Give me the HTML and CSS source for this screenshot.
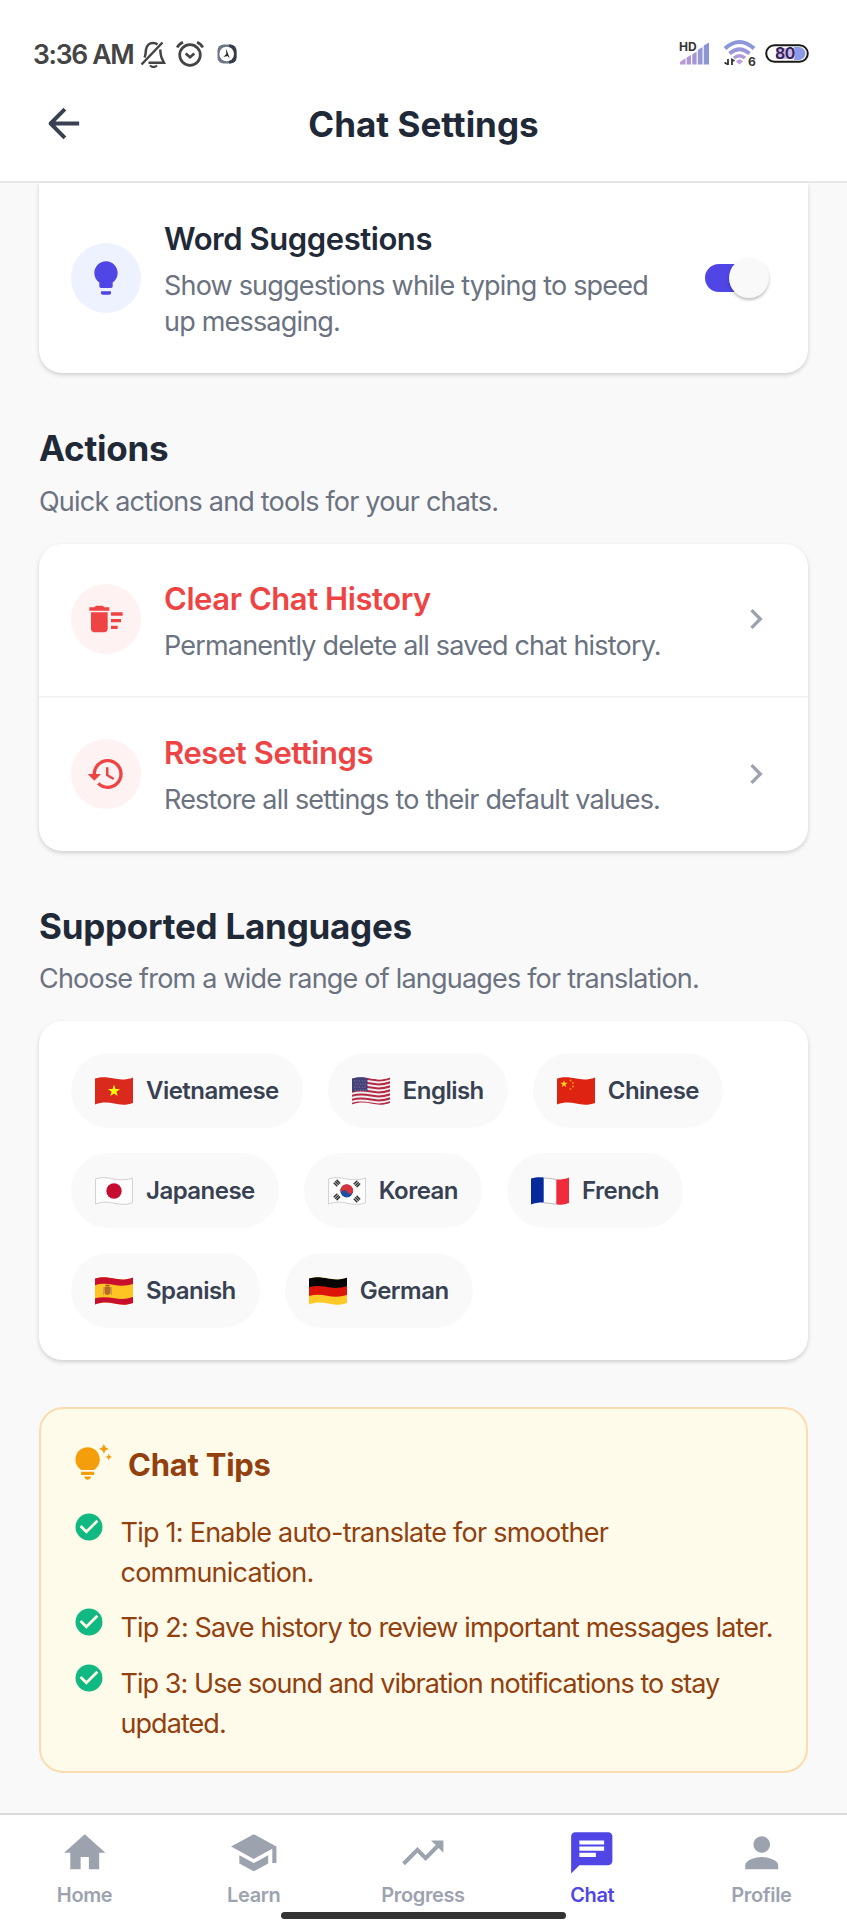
FILE: index.html
```html
<!DOCTYPE html>
<html lang="en">
<head>
<meta charset="utf-8">
<title>Chat Settings</title>
<link rel="stylesheet" href="styles.css">
</head>
<body>
<svg class="defs" aria-hidden="true">
  <defs>
    <clipPath id="cloth"><path d="M0 1.6C7 -.6 13 .4 19 1.6S32 2.8 38 .4V26C32 28.4 25 28 19 26.6S7 25 0 27.6Z"/></clipPath>
    <path id="wave" d="M-1 2C7 -.6 13 .4 19 1.6S32 2.8 39 0"/>
    <path id="star" d="M0 -5L1.2 -1.6H4.8L1.9 .6L3 4L0 1.9L-3 4L-1.9 .6L-4.8 -1.6H-1.2Z"/>
    <path id="edge" d="M.4 2C7 -.2 13 .8 19 2S32 3.2 37.6 1V25.8C32 28 25 27.6 19 26.2S7 24.6 .4 27Z"/>
  </defs>
</svg>
<div class="screen">
  <header class="top">
    <div class="status">
      <span class="time">3:36 AM</span>
      <svg class="s-bell" width="26" height="28" viewBox="0 0 26 28" fill="none" stroke="#444" stroke-width="2.5"><path d="M1.5 24.5L22.5 2.5"/><path d="M4.5 17.5C6 14.500 5.500 12.500 6 9.500C6.800 5.500 9.500 3 13 3C15 3 16.500 3.500 17.500 4.500"/><path d="M20.200 9.500C20.500 12 20.500 15 21.500 17.500L24 22.800H8.500"/><path d="M10 25.500Q13.500 28.500 17 25.500" stroke-width="2.200"/></svg>
      <svg class="s-alarm" width="28" height="28" viewBox="0 0 28 28" fill="none" stroke="#444" stroke-width="2.700"><circle cx="14" cy="15" r="10.300"/><path d="M1.200 7.500Q2.800 4 7 2.300M26.800 7.500Q25.200 4 21 2.300M9.700 13.500L14 17.200L18.300 13.500"/></svg>
      <svg class="s-app" width="20" height="20" viewBox="0 0 20 20"><rect x=".5" y=".5" width="19" height="19" rx="6" fill="#6d7686"/><path d="M12 .5Q19.500 .5 19.500 8V13Q19.500 19.500 12 19.500Z" fill="#343c4a"/><circle cx="9.700" cy="10" r="7.300" fill="#fff"/><path d="M9 4.500L12.800 14.500L10.500 12L6.500 13L9.300 10Z" fill="#222"/></svg>
      <span class="grow"></span>
      <svg class="s-signal" width="32" height="32" viewBox="0 -6 32 32"><defs><linearGradient id="sg" gradientUnits="userSpaceOnUse" x1="0" x2="31" y1="0" y2="0"><stop offset="0" stop-color="#c49ad9"/><stop offset="1" stop-color="#8295d3"/></linearGradient></defs><path fill="url(#sg)" d="M1 23.500V21L6.500 17V23.500ZM7.600 23.500V16.500L12 14V23.500ZM13.200 23.500V13.500L17.600 10.500V23.500ZM18.800 23.500V9L23.500 6V23.500ZM24.700 23.500V4.500L30 1.500V23.500Z"/><text x="0" y="10" class="micro">HD</text></svg>
      <svg class="s-wifi" width="34" height="30" viewBox="0 0 34 30" fill="none" stroke-width="4"><path d="M2 9.500Q16.500 -3.500 31 9.500" stroke="#8b97d8"/><path d="M6.500 14.500Q16.500 6 26.500 14.500" stroke="#9a98d9"/><path d="M11 19Q16.500 14.500 22 19" stroke="#ad99dc" stroke-width="3.500"/><path d="M13 22.500Q16.500 18.500 20 22.500L16.500 25.500Z" fill="#c39be0"/><path d="M5 20V26M5 25.500L1.500 23.500M9 26V20.500L11.500 22" stroke="#333" stroke-width="1.800"/><text x="25" y="27" class="micro">6</text></svg>
      <svg class="s-batt" width="44" height="19" viewBox="0 0 44 19"><path d="M29 3H34A6.500 6.500 0 0 1 34 16H29Z" fill="#8d9be6"/><path d="M11 4H30V15H11Z" fill="#cfb6ee"/><rect x="1.200" y="1.200" width="41.600" height="16.600" rx="8.300" fill="none" stroke="#191919" stroke-width="2"/><text x="10" y="15" class="batt-text">80</text></svg>
    </div>
    <div class="bar">
      <svg class="back" width="47" height="47" viewBox="0 0 24 24" fill="none" stroke="#374151" stroke-width="2" stroke-linejoin="round"><path d="M20 12H5.400M12.700 4.700L5.400 12L12.700 19.300"/></svg>
      <h1>Chat Settings</h1>
    </div>
  </header>

  <main class="content">
    <section class="card card-cut">
      <div class="row">
        <span class="badge indigo"><svg width="40" height="40" viewBox="0 0 24 24"><path d="M9 21c0 .55.45 1 1 1h4c.55 0 1-.45 1-1v-1H9v1zm3-19C8.140 2 5 5.140 5 9c0 2.380 1.190 4.470 3 5.740V17c0 .55.45 1 1 1h6c.55 0 1-.45 1-1v-2.260c1.810-1.270 3-3.360 3-5.740 0-3.860-3.140-7-7-7z"/></svg></span>
        <div class="text"><h3>Word Suggestions</h3><p>Show suggestions while typing to speed<br>up messaging.</p></div>
        <span class="switch"><span class="thumb"></span></span>
      </div>
    </section>

    <h2>Actions</h2>
    <p class="sub">Quick actions and tools for your chats.</p>
    <section class="card">
      <div class="row divided">
        <span class="badge red"><svg width="40" height="40" viewBox="0 0 24 24"><path d="M15 16h4v2h-4zm0-8h7v2h-7zm0 4h6v2h-6zM3 18c0 1.100.9 2 2 2h6c1.100 0 2-.9 2-2V8H3v10zM14 5h-3l-1-1H6L5 5H2v2h12z"/></svg></span>
        <div class="text danger"><h3>Clear Chat History</h3><p>Permanently delete all saved chat history.</p></div>
        <svg class="chev" width="40" height="40" viewBox="0 0 24 24"><path d="M10 6L8.590 7.410 13.170 12l-4.580 4.590L10 18l6-6z"/></svg>
      </div>
      <div class="row">
        <span class="badge red"><svg width="40" height="40" viewBox="0 0 24 24"><path d="M13 3c-4.970 0-9 4.030-9 9H1l3.890 3.890.07.14L9 12H6c0-3.870 3.130-7 7-7s7 3.130 7 7-3.130 7-7 7c-1.930 0-3.680-.79-4.940-2.060l-1.420 1.420C8.270 19.990 10.510 21 13 21c4.970 0 9-4.030 9-9s-4.030-9-9-9zm-1 5v5l4.280 2.540.72-1.210-3.500-2.080V8H12z"/></svg></span>
        <div class="text danger"><h3>Reset Settings</h3><p>Restore all settings to their default values.</p></div>
        <svg class="chev" width="40" height="40" viewBox="0 0 24 24"><path d="M10 6L8.590 7.410 13.170 12l-4.580 4.590L10 18l6-6z"/></svg>
      </div>
    </section>

    <h2>Supported Languages</h2>
    <p class="sub">Choose from a wide range of languages for translation.</p>
    <section class="card langs">
      <div class="chips">
        <span class="chip"><svg class="flag" viewBox="0 0 38 28"><g clip-path="url(#cloth)"><rect width="38" height="28" fill="#da2a1e"/><use href="#star" transform="translate(19 14) scale(1.250)" fill="#ff0"/></g></svg>Vietnamese</span>
        <span class="chip"><svg class="flag" viewBox="0 0 38 28"><g clip-path="url(#cloth)"><rect width="38" height="28" fill="#f3eef0"/><g fill="none" stroke="#b22b46" stroke-width="2"><use href="#wave" y="1"/><use href="#wave" y="5"/><use href="#wave" y="9"/><use href="#wave" y="13"/><use href="#wave" y="17"/><use href="#wave" y="21"/><use href="#wave" y="25"/></g><path d="M0 0H15.500V14.500Q8 13 0 15Z" fill="#433f78"/><path d="M2 4H15M3 7H15M2 10H15M3 13H15" stroke="#9a98b8" stroke-width=".9" stroke-dasharray="1 1.600"/></g></svg>English</span>
        <span class="chip"><svg class="flag" viewBox="0 0 38 28"><g clip-path="url(#cloth)"><rect width="38" height="28" fill="#de2410"/><use href="#star" transform="translate(7 7) scale(.75)" fill="#ffd91c"/><g fill="#f59a12"><circle cx="13.500" cy="3.500" r=".9"/><circle cx="16" cy="6" r=".9"/><circle cx="16" cy="9.500" r=".9"/><circle cx="13.500" cy="12" r=".9"/></g></g></svg>Chinese</span>
        <span class="chip"><svg class="flag" viewBox="0 0 38 28"><g clip-path="url(#cloth)"><rect width="38" height="28" fill="#fdfdfd"/><circle cx="19" cy="14" r="7.700" fill="#c60c30"/></g><use href="#edge" fill="none" stroke="#c9c9c9" stroke-width=".9"/></svg>Japanese</span>
        <span class="chip"><svg class="flag" viewBox="0 0 38 28"><g clip-path="url(#cloth)"><rect width="38" height="28" fill="#fdfdfd"/><circle cx="18.700" cy="14" r="6.400" fill="#1b50a4"/><path d="M12.900 11.200A6.400 6.400 0 0 1 24.900 15.600C23 18 20.500 17 18.700 14.500C16.500 11.500 14 14.500 12.700 15.300A6.400 6.400 0 0 1 12.900 11.200Z" fill="#d5333b"/><g stroke="#333" stroke-width="5" stroke-dasharray="1.500 .5"><path d="M7 8L11 4"/><path d="M27 5L31 9"/><path d="M7 18L11 22"/><path d="M27 24L31 20"/></g></g><use href="#edge" fill="none" stroke="#c9c9c9" stroke-width=".9"/></svg>Korean</span>
        <span class="chip"><svg class="flag" viewBox="0 0 38 28"><g clip-path="url(#cloth)"><rect width="38" height="28" fill="#fdfdfd"/><rect width="12.700" height="28" fill="#062a9b"/><rect x="25.300" width="13" height="28" fill="#ef2b3c"/></g><path d="M12.700 1Q19 1.200 25.300 2.500M12.700 25.800Q19 26 25.300 27.300" fill="none" stroke="#aaa" stroke-width=".8"/></svg>French</span>
        <span class="chip"><svg class="flag" viewBox="0 0 38 28"><g clip-path="url(#cloth)"><rect width="38" height="28" fill="#fdc423"/><g fill="none" stroke="#c8102e" stroke-width="7"><use href="#wave" y="2.800"/><use href="#wave" y="23.200"/></g><path d="M9.500 10H15.500V15Q15.500 17.500 12.500 18Q9.500 17.500 9.500 15Z" fill="#bb6a26"/><path d="M8.700 10V18M16.300 10V18" stroke="#b09a67"/><path d="M10.500 8.700H14.500" stroke="#a8541f" stroke-width="1.800"/></g></svg>Spanish</span>
        <span class="chip"><svg class="flag" viewBox="0 0 38 28"><g clip-path="url(#cloth)"><rect width="38" height="28" fill="#fdc924"/><g fill="none" stroke-width="9"><use href="#wave" y="12.800" stroke="#dd1409"/><use href="#wave" y="4" stroke="#050505"/></g></g></svg>German</span>
      </div>
    </section>

    <section class="tips">
      <div class="tips-head">
        <svg width="39" height="39" viewBox="0 0 24 24" fill="#f59e0b"><path d="M7 20h4c0 1.100-.9 2-2 2s-2-.9-2-2zm-2-1h8v-2H5v2zm11.500-9.500c0 3.820-2.660 5.860-3.770 6.500H5.270c-1.110-.64-3.770-2.680-3.770-6.500C1.500 5.360 4.860 2 9 2s7.500 3.360 7.500 7.500zm4.870-2.130L20 8l1.370.63L22 10l.63-1.370L24 8l-1.370-.63L22 6l-.63 1.370zM19 6l.94-2.060L22 3l-2.060-.94L19 0l-.94 2.060L16 3l2.060.94L19 6z"/></svg>
        <h3>Chat Tips</h3>
      </div>
      <ul>
        <li><svg width="32" height="32" viewBox="0 0 24 24"><circle cx="12" cy="12" r="10.100" fill="#10b981"/><path d="M5.700 11.300L10 15.600L18.300 7.300" fill="none" stroke="#fffbeb" stroke-width="2"/></svg><span class="tight-less">Tip 1: Enable auto-translate for smoother<br>communication.</span></li>
        <li><svg width="32" height="32" viewBox="0 0 24 24"><circle cx="12" cy="12" r="10.100" fill="#10b981"/><path d="M5.700 11.300L10 15.600L18.300 7.300" fill="none" stroke="#fffbeb" stroke-width="2"/></svg><span>Tip 2: Save history to review important messages later.</span></li>
        <li><svg width="32" height="32" viewBox="0 0 24 24"><circle cx="12" cy="12" r="10.100" fill="#10b981"/><path d="M5.700 11.300L10 15.600L18.300 7.300" fill="none" stroke="#fffbeb" stroke-width="2"/></svg><span class="tight-more">Tip 3: Use sound and vibration notifications to stay<br>updated.</span></li>
      </ul>
    </section>
  </main>

  <nav class="tabs">
    <a class="tab"><svg viewBox="0 0 24 24"><path d="M10 20v-6h4v6h5v-8h3L12 3 2 12h3v8z"/></svg>Home</a>
    <a class="tab"><svg viewBox="0 0 24 24"><path d="M5 13.180v4L12 21l7-3.820v-4L12 17l-7-3.820zM12 3L1 9l11 6 9-4.910V17h2V9L12 3z"/></svg>Learn</a>
    <a class="tab"><svg viewBox="0 0 24 24"><path d="M16 6l2.290 2.290-4.880 4.880-4-4L2 16.590 3.410 18l6-6 4 4 6.300-6.290L22 12V6z"/></svg>Progress</a>
    <a class="tab active"><svg viewBox="0 0 24 24"><path d="M20 2H4c-1.100 0-1.990.9-1.990 2L2 22l4-4h14c1.100 0 2-.9 2-2V4c0-1.100-.9-2-2-2zM6 9h12v2H6V9zm8 5H6v-2h8v2zm4-6H6V6h12v2z"/></svg>Chat</a>
    <a class="tab"><svg viewBox="0 0 24 24"><path d="M12 12c2.210 0 4-1.790 4-4s-1.790-4-4-4-4 1.790-4 4 1.790 4 4 4zm0 2c-2.670 0-8 1.340-8 4v2h16v-2c0-2.660-5.330-4-8-4z"/></svg>Profile</a>
    <span class="gesture"></span>
  </nav>
</div>
</body>
</html>
```
FILE: styles.css
```css
* { box-sizing: border-box; margin: 0; padding: 0; }
body { font-family: Inter, "Liberation Sans", sans-serif; background: #f9f9fa; color: #1f2937; }
svg { display: block; flex: none; }
.defs { position: absolute; width: 0; height: 0; }
.screen { width: 847px; height: 1931px; display: flex; flex-direction: column; overflow: hidden; }

.top { height: 183px; background: #fff; border-bottom: 2px solid #e6e7e9; display: flex; flex-direction: column; flex: none; }
.status { height: 74px; padding: 33px 38px 0 33px; display: flex; align-items: center; }
.time { font-size: 26.500px; font-weight: 600; color: #444; letter-spacing: -.05em; width: 107px; white-space: nowrap; }
.s-alarm { margin-left: 10px; }
.s-app { margin-left: 13px; }
.grow { flex: 1; }
.s-signal { margin-top: -6px; }
.s-wifi { margin-left: 12px; }
.s-batt { margin-left: 8px; }
.micro { font: 700 12px Inter, sans-serif; fill: #333; stroke: none; }
.batt-text { font: 600 16px Inter, sans-serif; fill: #2d2350; letter-spacing: -.5px; }
.bar { display: grid; grid-template-columns: 47px 1fr 47px; align-items: center; padding: 26px 40px 0; }
.bar h1 { font-size: 35px; line-height: 42px; font-weight: 700; letter-spacing: 0; text-align: center; }

.content { flex: 1; padding: 0 39px; }
.card { background: #fff; border-radius: 23px; box-shadow: 0 2px 4px rgba(0, 0, 0, .17); }
.card-cut { border-radius: 0 0 23px 23px; padding: 1px 0 .5px; }
.row { display: flex; align-items: center; padding: 34px 32px 32.500px; }
.divided { border-bottom: 2px solid #f3f4f6; }
.badge { width: 70px; height: 70px; border-radius: 50%; display: grid; place-items: center; flex: none; margin-bottom: 3px; }
.indigo { background: #eef2ff; fill: #4f46e5; }
.red { background: #fef2f2; fill: #ef4444; }
.text { flex: 1; margin-left: 23px; white-space: nowrap; }
.text h3 { font-size: 31px; line-height: 42px; font-weight: 600; letter-spacing: -.014em; margin-bottom: 8px; }
.danger h3 { color: #ef4444; }
.text p { font-size: 27px; line-height: 36px; letter-spacing: -.03em; color: #6b7280; }
.chev { fill: #9ca3af; margin-bottom: 3px; }
.switch { width: 64px; height: 28px; margin: 0 7px 3px 0; border-radius: 14px; display: flex; align-items: center; justify-content: flex-end; background: linear-gradient(90deg, #4f46e5 44px, transparent 44px); }
.thumb { width: 40px; height: 40px; border-radius: 50%; background: #f9f9f9; box-shadow: 0 2px 3px rgba(0, 0, 0, .25); flex: none; }

h2 { margin-top: 54px; font-size: 35px; line-height: 42px; font-weight: 700; letter-spacing: -.007em; white-space: nowrap; }
.sub { margin: 14.500px 0 24px; font-size: 27px; line-height: 36px; letter-spacing: -.0295em; color: #6b7280; white-space: nowrap; }

.langs { padding: 32px; }
.chips { display: flex; flex-wrap: wrap; gap: 25px; }
.chip { height: 75px; border-radius: 38px; background: #f9f9fa; display: flex; align-items: center; padding: 1px 24px; font-size: 24px; font-weight: 600; letter-spacing: -.022em; color: #374151; white-space: nowrap; }
.flag { width: 38px; height: 28px; margin: 0 13px 0 0; }

.tips { margin: 47px 0 0; height: 366px; border: 2px solid #fbdcae; border-radius: 24px; background: #fffbeb; padding: 34px 30px 0 32px; }
.tips-head { display: flex; align-items: center; height: 40px; }
.tips-head h3 { margin: 4px 0 0 16px; font-size: 31px; line-height: 40px; font-weight: 700; letter-spacing: -.008em; color: #92400e; }
.tips ul { list-style: none; margin-top: 29.500px; display: flex; flex-direction: column; gap: 15.500px; }
.tips li { display: flex; gap: 15.500px; font-size: 27px; line-height: 40px; letter-spacing: -.031em; color: #92400e; white-space: nowrap; }
.tips li svg { margin-top: -2px; }
.tight-less { letter-spacing: -.028em; }
.tight-more { letter-spacing: -.035em; }

.tabs { height: 118px; flex: none; background: #fff; border-top: 2px solid #d9dadc; display: grid; grid-template-columns: repeat(5, 1fr); padding-right: 1px; position: relative; }
.tab { display: flex; flex-direction: column; align-items: center; padding-top: 13px; font-size: 20px; line-height: 24px; font-weight: 600; letter-spacing: -.018em; color: #9ca3af; }
.tab svg { width: 49.500px; height: 49.500px; margin-bottom: 5px; fill: #9ca3af; }
.active { color: #4f46e5; }
.active svg { fill: #4f46e5; }
.gesture { position: absolute; left: 281px; top: 97px; width: 285px; height: 7px; border-radius: 4px; background: #333; }
```
